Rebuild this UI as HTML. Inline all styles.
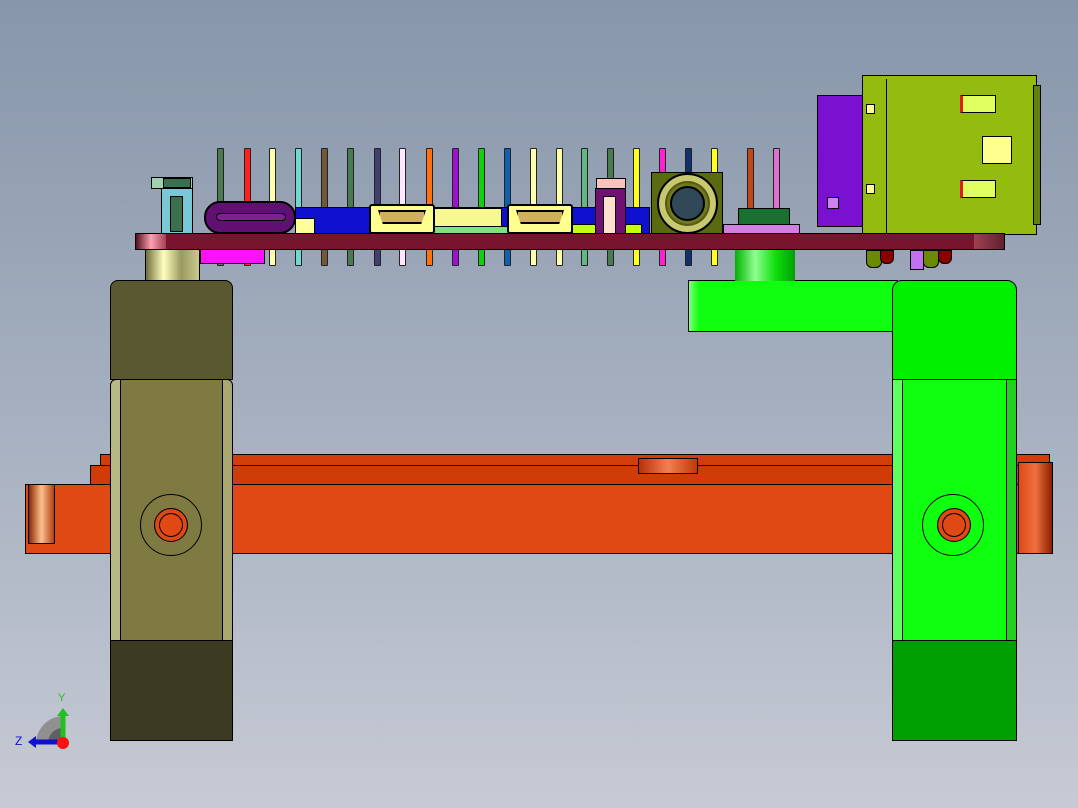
<!DOCTYPE html>
<html><head><meta charset="utf-8"><style>
*{margin:0;padding:0;box-sizing:border-box}
body{width:1078px;height:808px;overflow:hidden;position:relative;background:linear-gradient(180deg,#8796aa 0%,#a5afbf 50%,#c6cad4 100%);font-family:"Liberation Sans",sans-serif}
div{position:absolute}
.b{border:1px solid #000}
.pin{width:7px;border:1px solid #222;border-radius:1px}
</style></head><body>

<!-- orange bar -->
<div class="b" style="left:100px;top:454px;width:950px;height:12px;background:#d23e0a"></div>
<div class="b" style="left:90px;top:465px;width:960px;height:20px;background:#cf3c08"></div>
<div class="b" style="left:638px;top:458px;width:60px;height:16px;background:linear-gradient(90deg,#b83008,#f08050,#c03808)"></div>
<div class="b" style="left:25px;top:484px;width:1027px;height:70px;background:#e04814"></div>
<div class="b" style="left:28px;top:484px;width:27px;height:60px;background:linear-gradient(90deg,#8a2800,#ffc090,#b04010)"></div>
<div class="b" style="left:1018px;top:462px;width:35px;height:92px;background:linear-gradient(90deg,#e04814,#f07040,#8a2000)"></div>

<!-- left block -->
<div class="b" style="left:145px;top:249px;width:55px;height:33px;background:linear-gradient(90deg,#707040,#ffffc0,#9a9a60,#c8c890)"></div>
<div class="b" style="left:110px;top:280px;width:123px;height:100px;background:#5a5830;border-radius:8px 8px 0 0"></div>
<div class="b" style="left:110px;top:379px;width:123px;height:262px;background:#7e7a42;border-radius:6px 6px 0 0;box-shadow:inset 10px 0 0 #b8b880,inset -10px 0 0 #a8a870"></div>
<div style="left:120px;top:380px;width:103px;height:260px;background:#7e7a42;border-left:1px solid #000;border-right:1px solid #000"></div>
<div class="b" style="left:110px;top:640px;width:123px;height:101px;background:#3c3a20"></div>
<div style="left:140px;top:494px;width:62px;height:62px;border:1px solid #000;border-radius:50%"></div>
<div style="left:154px;top:508px;width:34px;height:34px;border:1px solid #000;border-radius:50%;background:#e04814;box-shadow:inset 0 0 0 4px #e04814,inset 0 0 0 5px #000"></div>

<!-- right green -->
<div class="b" style="left:688px;top:280px;width:210px;height:52px;background:linear-gradient(90deg,#80ff80 0,#10ff10 10px,#10ff10)"></div>
<div style="left:735px;top:249px;width:60px;height:32px;background:linear-gradient(90deg,#00b000,#90ff90,#10e010,#00a000)"></div>
<div class="b" style="left:892px;top:280px;width:125px;height:100px;background:#00f000;border-radius:10px 10px 0 0"></div>
<div class="b" style="left:892px;top:379px;width:125px;height:262px;background:#10ff10;box-shadow:inset 10px 0 0 #60ff60,inset -10px 0 0 #20d020"></div>
<div style="left:902px;top:380px;width:105px;height:260px;background:#10ff10;border-left:1px solid #000;border-right:1px solid #000"></div>
<div class="b" style="left:892px;top:640px;width:125px;height:101px;background:#00a000"></div>
<div style="left:922px;top:494px;width:62px;height:62px;border:1px solid #000;border-radius:50%"></div>
<div style="left:937px;top:508px;width:34px;height:34px;border:1px solid #000;border-radius:50%;background:#e04814;box-shadow:inset 0 0 0 4px #e04814,inset 0 0 0 5px #000"></div>

<!-- pins -->
<div class="pin" style="left:217px;top:148px;height:118px;background:#4a7a50"></div>
<div class="pin" style="left:244px;top:148px;height:118px;background:#ff2020"></div>
<div class="pin" style="left:269px;top:148px;height:118px;background:#ffffaa"></div>
<div class="pin" style="left:295px;top:148px;height:118px;background:#70d8d0"></div>
<div class="pin" style="left:321px;top:148px;height:118px;background:#705838"></div>
<div class="pin" style="left:347px;top:148px;height:118px;background:#4a7a50"></div>
<div class="pin" style="left:374px;top:148px;height:118px;background:#404070"></div>
<div class="pin" style="left:399px;top:148px;height:118px;background:#ffe8ff"></div>
<div class="pin" style="left:426px;top:148px;height:118px;background:#ff7010"></div>
<div class="pin" style="left:452px;top:148px;height:118px;background:#a010d0"></div>
<div class="pin" style="left:478px;top:148px;height:118px;background:#10d010"></div>
<div class="pin" style="left:504px;top:148px;height:118px;background:#1060b0"></div>
<div class="pin" style="left:530px;top:148px;height:118px;background:#ffffaa"></div>
<div class="pin" style="left:556px;top:148px;height:118px;background:#ffffaa"></div>
<div class="pin" style="left:581px;top:148px;height:118px;background:#60b880"></div>
<div class="pin" style="left:607px;top:148px;height:118px;background:#4a7a50"></div>
<div class="pin" style="left:633px;top:148px;height:118px;background:#ffff20"></div>
<div class="pin" style="left:659px;top:148px;height:118px;background:#ff20d0"></div>
<div class="pin" style="left:685px;top:148px;height:118px;background:#103070"></div>
<div class="pin" style="left:711px;top:148px;height:118px;background:#ffff20"></div>
<div class="pin" style="left:747px;top:148px;height:88px;background:#c04818"></div>
<div class="pin" style="left:773px;top:148px;height:88px;background:#e070d0"></div>

<!-- blue band components -->
<div class="b" style="left:295px;top:207px;width:355px;height:27px;background:#1010d0"></div>
<div class="b" style="left:295px;top:218px;width:20px;height:16px;background:#ffff99"></div>
<div class="b" style="left:432px;top:208px;width:70px;height:26px;background:#f8f890"></div>
<div class="b" style="left:432px;top:226px;width:140px;height:8px;background:#80e080"></div>
<div class="b" style="left:572px;top:224px;width:70px;height:10px;background:#c0ff10"></div>
<div class="b" style="left:738px;top:208px;width:52px;height:18px;background:#1a7030"></div>
<div class="b" style="left:723px;top:224px;width:77px;height:10px;background:#d080e0"></div>
<!-- usb-c -->
<div style="left:204px;top:201px;width:92px;height:33px;border:2px solid #000;border-radius:16px;background:#601070"></div>
<div style="left:216px;top:213px;width:70px;height:8px;border:1px solid #000;border-radius:4px;background:#802090"></div>
<div style="left:200px;top:249px;width:65px;height:15px;border:1px solid #000;background:#ff10ff"></div>
<!-- hdmi -->
<div style="left:369px;top:204px;width:66px;height:30px;border:2px solid #000;background:#ffff90;border-radius:3px"></div>
<div style="left:378px;top:210px;width:48px;height:14px;border:2px solid #000;background:#d0b060;clip-path:polygon(0 0,100% 0,90% 100%,10% 100%)"></div>
<div style="left:507px;top:204px;width:66px;height:30px;border:2px solid #000;background:#ffff90;border-radius:3px"></div>
<div style="left:516px;top:210px;width:48px;height:14px;border:2px solid #000;background:#d0b060;clip-path:polygon(0 0,100% 0,90% 100%,10% 100%)"></div>
<!-- left small connector -->
<div class="b" style="left:161px;top:188px;width:32px;height:46px;background:#78c8d8"></div>
<div class="b" style="left:170px;top:196px;width:13px;height:36px;background:#3a7050"></div>
<div class="b" style="left:151px;top:177px;width:42px;height:12px;background:#a0d0b0"></div>
<div class="b" style="left:163px;top:178px;width:28px;height:10px;background:#3a7050"></div>
<!-- magenta component -->
<div class="b" style="left:595px;top:188px;width:31px;height:46px;background:#701070"></div>
<div class="b" style="left:603px;top:196px;width:13px;height:38px;background:#ffe0d0"></div>
<div class="b" style="left:596px;top:178px;width:30px;height:11px;background:#ffc0c0"></div>
<!-- audio jack -->
<div class="b" style="left:651px;top:172px;width:72px;height:62px;background:#5a6a10"></div>
<div style="left:657px;top:173px;width:61px;height:61px;border:2px solid #000;border-radius:50%;background:#707820;box-shadow:inset 0 0 0 6px #c8c870,inset 0 0 0 8px #555a10"></div>
<div style="left:670px;top:186px;width:35px;height:35px;border:2px solid #000;border-radius:50%;background:#304858"></div>

<!-- right connector -->
<div class="b" style="left:817px;top:95px;width:48px;height:132px;background:#7a10d0"></div>
<div class="b" style="left:827px;top:197px;width:12px;height:12px;background:#d080f0"></div>
<div class="b" style="left:862px;top:75px;width:175px;height:160px;background:#94bb10"></div>
<div style="left:862px;top:79px;width:25px;height:155px;border-right:1px solid #000"></div>
<div class="b" style="left:960px;top:95px;width:36px;height:18px;background:#e0ff60;border-left:3px solid #e02020"></div>
<div class="b" style="left:982px;top:136px;width:30px;height:28px;background:#ffff90"></div>
<div class="b" style="left:960px;top:180px;width:36px;height:18px;background:#e0ff60;border-left:3px solid #e02020"></div>
<div class="b" style="left:866px;top:104px;width:9px;height:10px;background:#ffff90"></div>
<div class="b" style="left:866px;top:184px;width:9px;height:10px;background:#ffff90"></div>
<div class="b" style="left:1033px;top:85px;width:8px;height:140px;background:#608010"></div>

<!-- pcb -->
<div class="b" style="left:135px;top:233px;width:870px;height:17px;background:#78142e"></div>
<div style="left:136px;top:234px;width:30px;height:15px;background:linear-gradient(90deg,#501020,#ffa0b0,#a04050)"></div>
<div style="left:974px;top:234px;width:30px;height:15px;background:linear-gradient(90deg,#a04050,#602030)"></div>
<!-- under pcb bits -->
<div style="left:866px;top:250px;width:16px;height:18px;background:#6a8a00;border:1px solid #000;border-radius:0 0 6px 6px"></div>
<div style="left:880px;top:250px;width:14px;height:14px;background:#8a0000;border:1px solid #000;border-radius:0 0 6px 6px"></div>
<div style="left:910px;top:250px;width:14px;height:20px;background:#c070f0;border:1px solid #000"></div>
<div style="left:923px;top:250px;width:16px;height:18px;background:#6a8a00;border:1px solid #000;border-radius:0 0 6px 6px"></div>
<div style="left:938px;top:250px;width:14px;height:14px;background:#8a0000;border:1px solid #000;border-radius:0 0 6px 6px"></div>

<!-- axis triad -->
<svg style="position:absolute;left:0;top:680px" width="120" height="80">
<path d="M36,63 A28,28 0 0 1 63,36 L63,63 Z" fill="#909090"/>
<path d="M48,63 A15,15 0 0 1 63,48 L63,63 Z" fill="#606060"/>
<line x1="63" y1="62" x2="36" y2="62" stroke="#1010d0" stroke-width="5"/>
<polygon points="28,62 36,56 36,68" fill="#1010d0"/>
<line x1="63" y1="62" x2="63" y2="36" stroke="#20c020" stroke-width="5"/>
<polygon points="63,28 57,36 69,36" fill="#20c020"/>
<circle cx="63" cy="63" r="6" fill="#ff1010"/>
<text x="58" y="21" font-size="11" fill="#20c020" font-family="Liberation Sans">Y</text>
<text x="15" y="65" font-size="12" fill="#1010d0" font-family="Liberation Sans">Z</text>
</svg>
</body></html>
